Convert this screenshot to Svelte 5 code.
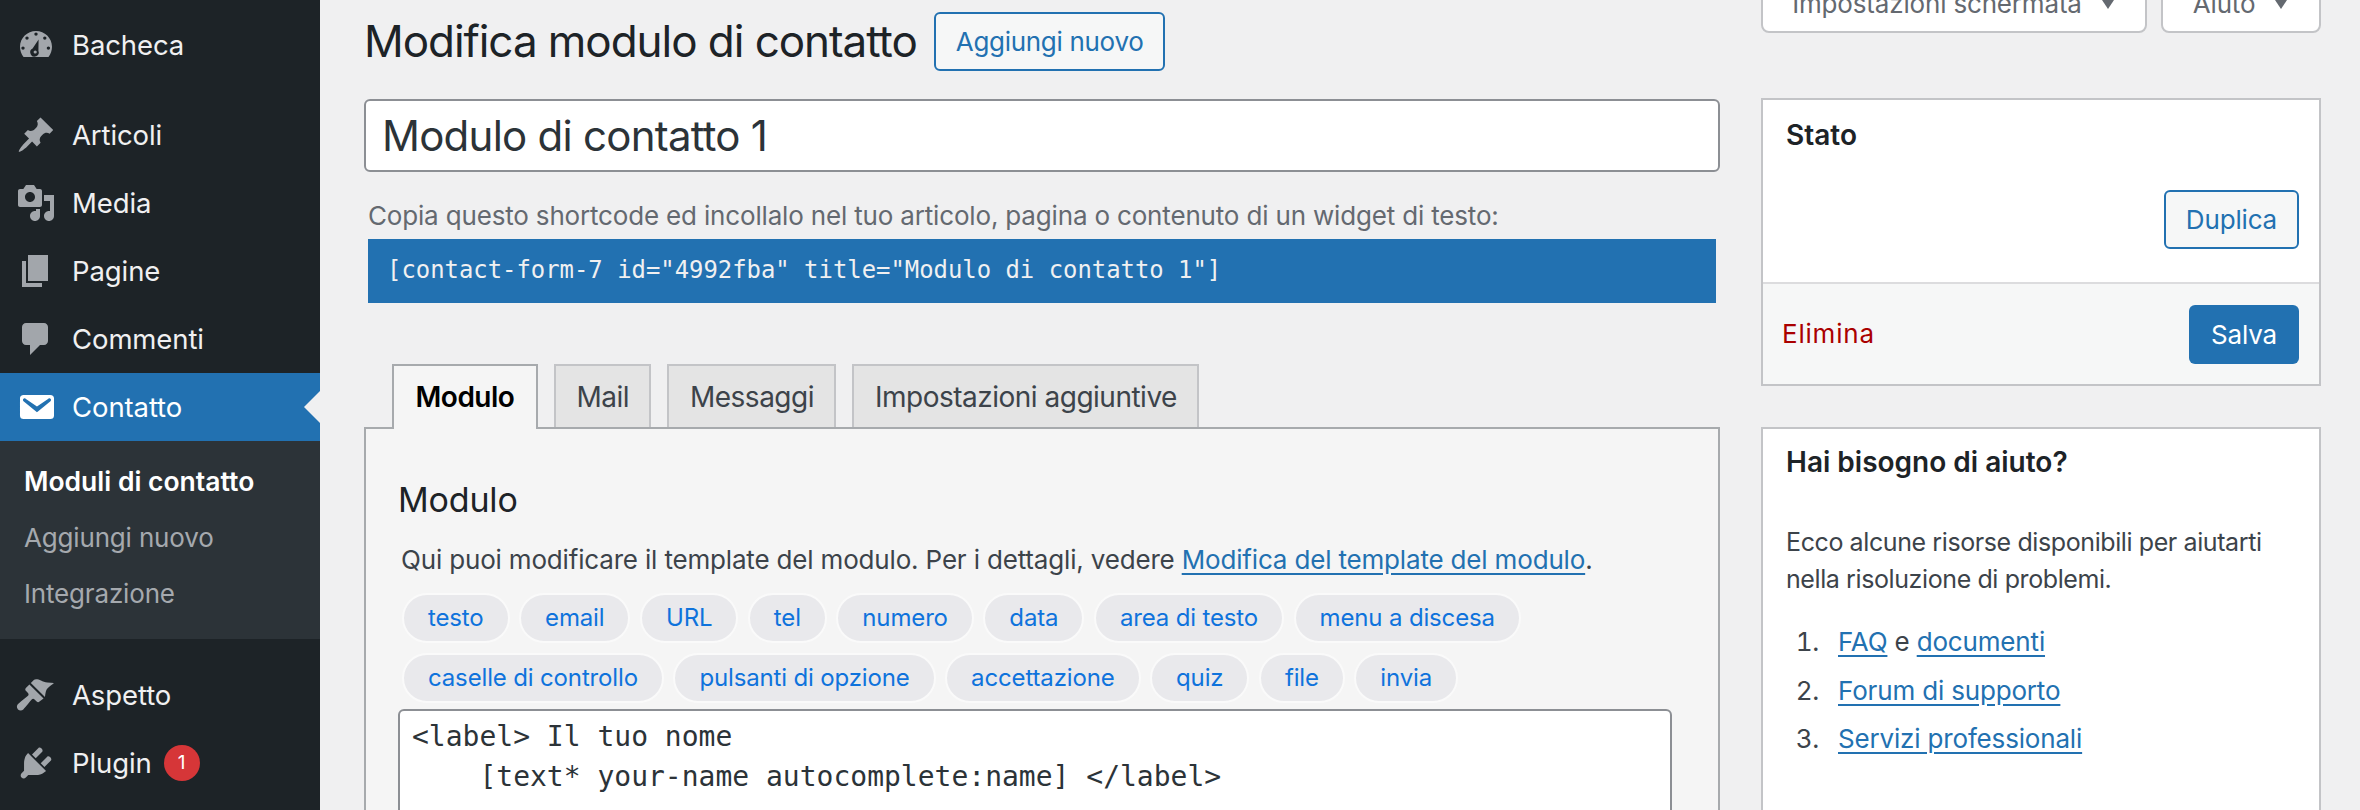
<script>
  const tagRows = [
    ['testo', 'email', 'URL', 'tel', 'numero', 'data', 'area di testo', 'menu a discesa'],
    ['caselle di controllo', 'pulsanti di opzione', 'accettazione', 'quiz', 'file', 'invia']
  ];
  const tabs = ['Mail', 'Messaggi', 'Impostazioni aggiuntive'];
  const subItems = ['Aggiungi nuovo', 'Integrazione'];
</script>

<div class="shell">
  <aside class="menu">
    <a class="item first">
      <svg viewBox="0 0 20 20"><path fill-rule="evenodd" d="M3.76 16h12.48C17.34 14.570 18 12.780 18 10.830 18 6.500 14.400 3 10 3S2 6.500 2 10.830c0 1.950.66 3.740 1.760 5.170zM10 3.700a.85.85 0 1 0 0 1.700.85.85 0 1 0 0-1.700zM5.500 5.700a.85.85 0 1 0 0 1.700.85.85 0 1 0 0-1.700zM14.400 5.700a.85.85 0 1 0 0 1.700.85.85 0 1 0 0-1.700zM3.500 10.700a.85.85 0 1 0 0 1.700.85.85 0 1 0 0-1.700zM16.200 10.700a.85.85 0 1 0 0 1.700.85.85 0 1 0 0-1.700zM11.300 7.300L8.300 11.800a2.100 2.100 0 1 0 2.900 1.100zM9.600 12.700a.8.8 0 1 1 0 1.600.8.8 0 1 1 0-1.600z"/></svg>
      <span>Bacheca</span>
    </a>
    <a class="item">
      <svg viewBox="0 0 20 20"><path d="M10.440 3.020l1.820-1.820 6.360 6.350-1.830 1.820c-1.050-.68-2.480-.57-3.410.36l-.75.75c-.92.93-1.040 2.350-.35 3.410l-1.830 1.820-2.410-2.410-2.800 2.790c-.42.42-3.380 2.710-3.800 2.290s1.860-3.390 2.280-3.810l2.790-2.790L4.100 9.360l1.830-1.820c1.050.69 2.480.57 3.410-.36l.75-.75c.93-.92 1.040-2.350.35-3.410z"/></svg>
      <span>Articoli</span>
    </a>
    <a class="item">
      <svg viewBox="0 0 20 20"><path fill-rule="evenodd" d="M13 11V4c0-.55-.45-1-1-1h-1.670L9 1H5L3.670 3H2c-.55 0-1 .45-1 1v7c0 .55.45 1 1 1h10c.55 0 1-.45 1-1zM7 4.500c1.380 0 2.500 1.120 2.500 2.500S8.380 9.500 7 9.500 4.500 8.380 4.500 7 5.620 4.500 7 4.500z"/><path d="M14 6h5v10.500c0 1.380-1.120 2.500-2.500 2.500S14 17.880 14 16.500s1.120-2.500 2.500-2.500c.17 0 .34.02.5.05V9h-3V6zm-4 8.050V13h2v3.500c0 1.380-1.120 2.500-2.500 2.500S7 17.880 7 16.500 8.120 14 9.500 14c.17 0 .34.02.5.05z"/></svg>
      <span>Media</span>
    </a>
    <a class="item">
      <svg viewBox="0 0 20 20"><path d="M6 15V2h10v13H6zm-1 1h8v2H3V5h2v11z"/></svg>
      <span>Pagine</span>
    </a>
    <a class="item">
      <svg viewBox="0 0 20 20"><path d="M5 2h9c1.100 0 2 .9 2 2v7c0 1.100-.9 2-2 2h-2l-5 5v-5H5c-1.100 0-2-.9-2-2V4c0-1.100.9-2 2-2z"/></svg>
      <span>Commenti</span>
    </a>
    <a class="item active">
      <svg class="mail" viewBox="0 0 20 20"><path d="M3.870 4h13.250C18.370 4 19 4.590 19 5.790v8.420c0 1.190-.63 1.790-1.880 1.790H3.870c-1.250 0-1.880-.6-1.880-1.790V5.790c0-1.200.63-1.790 1.880-1.790zm6.620 8.600l6.740-5.530c.24-.2.430-.66.13-1.070-.29-.41-.82-.42-1.170-.17l-5.700 3.860L4.800 5.830c-.35-.25-.88-.24-1.170.17-.3.410-.11.870.13 1.070z"/></svg>
      <span>Contatto</span>
    </a>
    <div class="submenu">
      <a class="sub current">Moduli di contatto</a>
      {#each subItems as label}
        <a class="sub">{label}</a>
      {/each}
    </div>
    <a class="item">
      <svg viewBox="0 0 20 20"><path d="M14.480 11.060L7.410 3.990l1.500-1.500c.5-.56 2.300-.47 3.590.32.9.5 2 .9 3.200.9 1.200 0 2.300.1 3.300.3-.8.8-2.400 1.700-3.300 2.700-.7.7-1 2.300-1.220 4.350zm-.71.71L6.700 4.700 4.930 6.470c-.39.39-.39 1.020 0 1.410l1.060 1.060c.39.39.39 1.030 0 1.420-.6.6-1.430 1.150-2.310 1.860-1.040.83-2.130 1.790-2.680 2.340-.73.73-.73 1.920 0 2.650s1.920.73 2.650 0c.55-.55 1.510-1.640 2.340-2.680.71-.88 1.260-1.710 1.860-2.310.39-.39 1.030-.39 1.420 0l1.060 1.060c.39.39 1.020.39 1.410 0z"/></svg>
      <span>Aspetto</span>
    </a>
    <a class="item">
      <svg viewBox="0 0 20 20"><path d="M13.110 4.360L9.870 7.600 8 5.730l3.240-3.240c.35-.34 1.050-.2 1.560.32.52.51.66 1.210.31 1.550zm-8 1.770l.91-1.120 9.010 9.010-1.190.84c-.71.71-2.630 1.160-3.820 1.160H6.140L4.900 17.260c-.59.59-1.540.59-2.120 0-.59-.58-.59-1.530 0-2.120l1.240-1.240v-3.880c0-1.130.4-3.040 1.090-3.890zm7.260 3.970l3.240-3.240c.34-.35 1.040-.21 1.550.31.52.51.66 1.210.31 1.550l-3.240 3.250z"/></svg>
      <span>Plugin</span>
      <b class="badge">1</b>
    </a>
  </aside>

  <main class="content">
    <section class="left">
      <div class="heading">
        <h1>Modifica modulo di contatto</h1>
        <button class="outline add">Aggiungi nuovo</button>
      </div>
      <input class="title" value="Modulo di contatto 1" />
      <p class="hint">Copia questo shortcode ed incollalo nel tuo articolo, pagina o contenuto di un widget di testo:</p>
      <div class="shortcode">[contact-form-7 id="4992fba" title="Modulo di contatto 1"]</div>

      <nav class="tabs">
        <span class="tab selected">Modulo</span>
        {#each tabs as tab}
          <span class="tab">{tab}</span>
        {/each}
      </nav>
      <div class="panel">
        <h2>Modulo</h2>
        <p class="desc">Qui puoi modificare il template del modulo. Per i dettagli, vedere <a href="#top">Modifica del template del modulo</a>.</p>
        {#each tagRows as row}
          <div class="tags">
            {#each row as tag}
              <span class="tag">{tag}</span>
            {/each}
          </div>
        {/each}
        <pre class="editor">&lt;label&gt; Il tuo nome
    [text* your-name autocomplete:name] &lt;/label&gt;</pre>
      </div>
    </section>

    <section class="right">
      <div class="meta">
        <button class="meta-btn screen">Impostazioni schermata <i></i></button>
        <button class="meta-btn help">Aiuto <i></i></button>
      </div>
      <div class="box status">
        <h3>Stato</h3>
        <div class="dup"><button class="outline">Duplica</button></div>
        <div class="actions">
          <a class="delete">Elimina</a>
          <button class="primary">Salva</button>
        </div>
      </div>
      <div class="box support">
        <h3>Hai bisogno di aiuto?</h3>
        <p>Ecco alcune risorse disponibili per aiutarti nella risoluzione di problemi.</p>
        <ol>
          <li><a href="#top">FAQ</a> e <a href="#top">documenti</a></li>
          <li><a href="#top">Forum di supporto</a></li>
          <li><a href="#top">Servizi professionali</a></li>
        </ol>
      </div>
    </section>
  </main>
</div>

<style>
  :global(body) {
    margin: 0;
    background: #f0f0f1;
  }

  .shell {
    display: flex;
    height: 810px;
    overflow: hidden;
    font-family: Inter, "Liberation Sans", sans-serif;
    font-size: 26px;
    letter-spacing: -0.17px;
    color: #3c434a;
    background: #f0f0f1;
  }

  .menu {
    flex: 0 0 320px;
    background: #1d2327;
    padding-top: 11px;
  }

  .item {
    position: relative;
    display: flex;
    align-items: center;
    height: 68px;
    color: #f0f0f1;
    font-size: 27.500px;
    letter-spacing: -0.1px;
  }

  .item.first {
    margin-bottom: 22px;
  }

  .item svg {
    flex: none;
    width: 40px;
    height: 40px;
    margin: 0 16px;
    fill: #a2a6ab;
  }

  .item svg.mail {
    fill: #fff;
  }

  .item.active {
    background: #2271b1;
    color: #fff;
  }

  .item.active::after {
    content: "";
    position: absolute;
    right: 0;
    top: 18px;
    border: 16px solid transparent;
    border-left: 0;
    border-right-color: #f0f0f1;
  }

  .badge {
    width: 36px;
    height: 36px;
    margin-left: 12px;
    border-radius: 50%;
    background: #d63638;
    color: #fff;
    font-size: 19px;
    font-weight: 400;
    line-height: 36px;
    text-align: center;
  }

  .submenu {
    display: flex;
    flex-direction: column;
    height: 198px;
    padding-top: 12px;
    margin-bottom: 22px;
    box-sizing: border-box;
    background: #2c3338;
  }

  .sub {
    padding-left: 24px;
    line-height: 56.500px;
    color: #a5a9ae;
  }

  .sub.current {
    color: #fff;
    font-size: 26.500px;
    font-weight: 600;
    letter-spacing: 0;
  }

  .content {
    flex: 1;
    display: flex;
    gap: 41px;
    padding-left: 44px;
  }

  .left {
    flex: 0 0 1356px;
    padding-top: 12px;
  }

  .heading {
    display: flex;
    align-items: center;
    gap: 17px;
    height: 59px;
  }

  h1 {
    margin: 0 0 2px;
    font-size: 44px;
    font-weight: 400;
    letter-spacing: -1.05px;
    color: #1d2327;
  }

  button {
    font: inherit;
    letter-spacing: inherit;
    box-sizing: border-box;
    height: 59px;
    border-radius: 6px;
    cursor: pointer;
  }

  .outline {
    padding: 0 20px;
    border: 2px solid #2271b1;
    background: #f6f7f7;
    color: #2271b1;
  }

  .outline.add {
    letter-spacing: -0.3px;
  }

  .primary {
    padding: 0 22px;
    border: 0;
    background: #2271b1;
    color: #fff;
  }

  input.title {
    display: block;
    box-sizing: border-box;
    width: 100%;
    height: 73px;
    margin-top: 28px;
    padding: 0 16px;
    border: 2px solid #8c8f94;
    border-radius: 6px;
    background: #fff;
    font: inherit;
    font-size: 42px;
    letter-spacing: -0.75px;
    color: #2c3338;
  }

  .hint {
    margin: 28px 0 0 4px;
    line-height: 32px;
    color: #646970;
  }

  .shortcode {
    height: 64px;
    margin: 7px 4px 0 4px;
    padding-left: 19px;
    background: #2271b1;
    color: #f0f0f1;
    font-family: "DejaVu Sans Mono", monospace;
    font-size: 23.900px;
    letter-spacing: 0;
    line-height: 63px;
  }

  .tabs {
    display: flex;
    gap: 16px;
    margin-top: 61px;
    padding-left: 28px;
  }

  .tab {
    box-sizing: border-box;
    height: 63px;
    margin-bottom: -2px;
    padding: 0 20.500px;
    border: 2px solid #c3c4c7;
    border-bottom: 0;
    background: #e4e4e4;
    font-size: 28px;
    letter-spacing: -0.5px;
    line-height: 62px;
    color: #3c434a;
  }

  .tab.selected {
    position: relative;
    z-index: 1;
    height: 65px;
    padding: 0 21.500px;
    border-color: #a7aaad;
    background: #f5f5f5;
    color: #000;
    font-weight: 600;
  }

  .panel {
    box-sizing: border-box;
    height: 400px;
    padding: 49px 46px 0 32px;
    border: 2px solid #a7aaad;
    background: #f5f5f5;
  }

  h2 {
    margin: 0;
    font-size: 34px;
    font-weight: 400;
    line-height: 44px;
    color: #1d2327;
  }

  .desc {
    margin: 21px 0 0 3px;
    line-height: 34px;
  }

  .desc a,
  .support a {
    color: #2271b1;
    text-decoration: underline;
    text-underline-offset: 4px;
  }

  .tags {
    display: flex;
    gap: 9.500px;
    margin: 10px 0 0 4px;
  }

  .desc + .tags {
    margin-top: 16px;
  }

  .tag {
    box-sizing: border-box;
    height: 50px;
    padding: 0 24px;
    border: 2px solid #fafafa;
    border-radius: 25px;
    background: #e9e9ec;
    color: #0f73dc;
    font-size: 24px;
    letter-spacing: -0.15px;
    line-height: 46px;
  }

  .editor {
    box-sizing: border-box;
    width: 1274px;
    height: 200px;
    margin: 6px 0 0;
    padding: 6px 12px;
    border: 2px solid #8c8f94;
    border-radius: 6px;
    background: #fff;
    color: #2c3338;
    font-family: "DejaVu Sans Mono", monospace;
    font-size: 28px;
    letter-spacing: 0;
    line-height: 40px;
  }

  .right {
    flex: 0 0 559px;
  }

  .meta {
    display: flex;
    justify-content: flex-end;
    gap: 14px;
    height: 33px;
  }

  .meta-btn {
    display: flex;
    align-items: center;
    justify-content: center;
    gap: 18px;
    height: 60px;
    margin-top: -27px;
    border: 2px solid #c3c4c7;
    border-radius: 0 0 8px 8px;
    background: #fff;
    color: #646970;
  }

  .meta-btn i {
    border: 8px solid transparent;
    border-top: 12px solid #646970;
    border-bottom: 0;
  }

  .screen {
    width: 386px;
  }

  .help {
    width: 160px;
  }

  .box {
    box-sizing: border-box;
    border: 2px solid #c3c4c7;
    background: #fff;
  }

  h3 {
    margin: 0;
    font-size: 28px;
    font-weight: 600;
    letter-spacing: 0;
    color: #1d2327;
  }

  .status {
    height: 288px;
    margin-top: 65px;
    display: flex;
    flex-direction: column;
  }

  .status h3 {
    padding: 19px 23px 0;
    line-height: 32px;
  }

  .dup {
    display: flex;
    justify-content: flex-end;
    padding: 39px 20px 0;
    flex: 1;
  }

  .actions {
    display: flex;
    align-items: center;
    justify-content: space-between;
    height: 102px;
    padding: 0 20px 0 19px;
    box-sizing: border-box;
    border-top: 2px solid #dcdcde;
    background: #f6f7f7;
  }

  .delete {
    padding-bottom: 2px;
    color: #a00;
    letter-spacing: 0.8px;
  }

  .support {
    height: 420px;
    margin-top: 41px;
    padding: 17px 23px;
  }

  .support h3 {
    line-height: 32px;
  }

  .support p {
    margin: 46px 0 0;
    font-size: 25px;
    letter-spacing: -0.4px;
    line-height: 37px;
  }

  .support ol {
    margin: 20px 0 0;
    padding-left: 40px;
  }

  .support li {
    padding-left: 12px;
    line-height: 48.500px;
  }

  .support li::marker {
    color: #3c434a;
  }
</style>
